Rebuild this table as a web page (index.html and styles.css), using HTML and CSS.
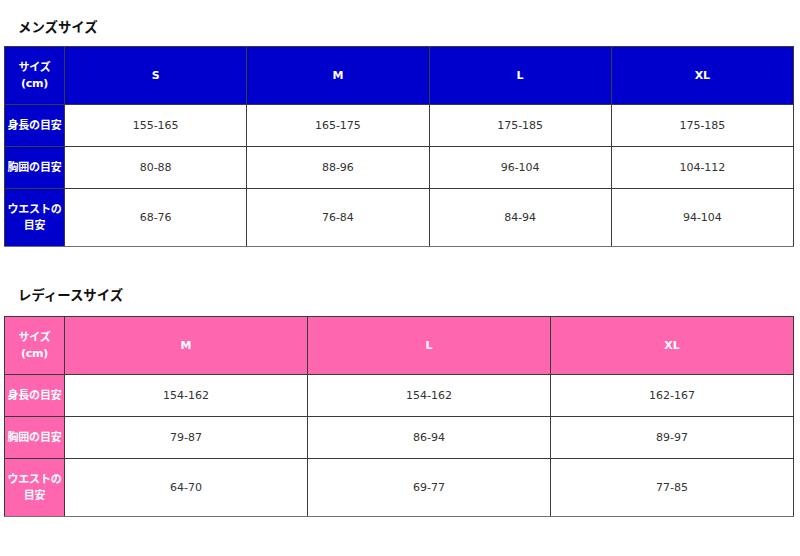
FILE: index.html
```html
<!DOCTYPE html>
<html lang="ja">
<head>
<meta charset="utf-8">
<link rel="stylesheet" href="styles.css">
</head>
<body>
<section class="block">
  <h2 class="title title-men">メンズサイズ</h2>
  <table class="size men">
    <tr class="head">
      <th class="label">サイズ<br>(cm)</th>
      <th>S</th><th>M</th><th>L</th><th>XL</th>
    </tr>
    <tr class="row">
      <th class="label">身長の目安</th>
      <td>155-165</td><td>165-175</td><td>175-185</td><td>175-185</td>
    </tr>
    <tr class="row">
      <th class="label">胸囲の目安</th>
      <td>80-88</td><td>88-96</td><td>96-104</td><td>104-112</td>
    </tr>
    <tr class="row tall">
      <th class="label">ウエストの<br>目安</th>
      <td>68-76</td><td>76-84</td><td>84-94</td><td>94-104</td>
    </tr>
  </table>
</section>
<section class="block">
  <h2 class="title title-lady">レディースサイズ</h2>
  <table class="size lady">
    <tr class="head">
      <th class="label">サイズ<br>(cm)</th>
      <th>M</th><th>L</th><th>XL</th>
    </tr>
    <tr class="row">
      <th class="label">身長の目安</th>
      <td>154-162</td><td>154-162</td><td>162-167</td>
    </tr>
    <tr class="row">
      <th class="label">胸囲の目安</th>
      <td>79-87</td><td>86-94</td><td>89-97</td>
    </tr>
    <tr class="row tall">
      <th class="label">ウエストの<br>目安</th>
      <td>64-70</td><td>69-77</td><td>77-85</td>
    </tr>
  </table>
</section>
</body>
</html>
```

FILE: styles.css
```css
html, body {
  margin: 0;
  padding: 0;
  background: #ffffff;
}
body {
  padding: 0 6px 0 4px;
  font-family: "DejaVu Sans", "Noto Sans CJK JP", sans-serif;
  font-size: 11px;
  color: #333333;
}
.title {
  margin: 0;
  padding-left: 14px;
  font-family: "Noto Sans CJK JP", sans-serif;
  font-size: 13.4px;
  font-weight: bold;
  line-height: 20px;
  color: #111111;
}
.title-men {
  margin-top: 16px;
  margin-bottom: 10px;
}
.title-lady {
  margin-top: 37px;
  margin-bottom: 12px;
}
.size {
  width: 790px;
  border-collapse: collapse;
  table-layout: fixed;
}
.size th,
.size td {
  border: 1px solid #3a3a3a;
  padding: 0;
  text-align: center;
  vertical-align: middle;
}
.size tr.row th,
.size tr.row td {
  border-top-color: #707070;
}
.size tr.head {
  height: 58px;
}
.size tr.row {
  height: 42px;
}
.size tr.row.tall {
  height: 58px;
}
.size tr.tall td,
.size tr.tall th {
  border-bottom-color: #707070;
}
.size th {
  color: #ffffff;
  font-weight: bold;
  font-size: 11px;
}
.size .label {
  width: 59px;
  line-height: 16px;
  font-size: 11px;
  white-space: nowrap;
  letter-spacing: -0.2px;
}
.size td {
  background: #ffffff;
  color: #333333;
}
.men th {
  background: #0000cc;
}
.lady th {
  background: #ff66b0;
}
```
